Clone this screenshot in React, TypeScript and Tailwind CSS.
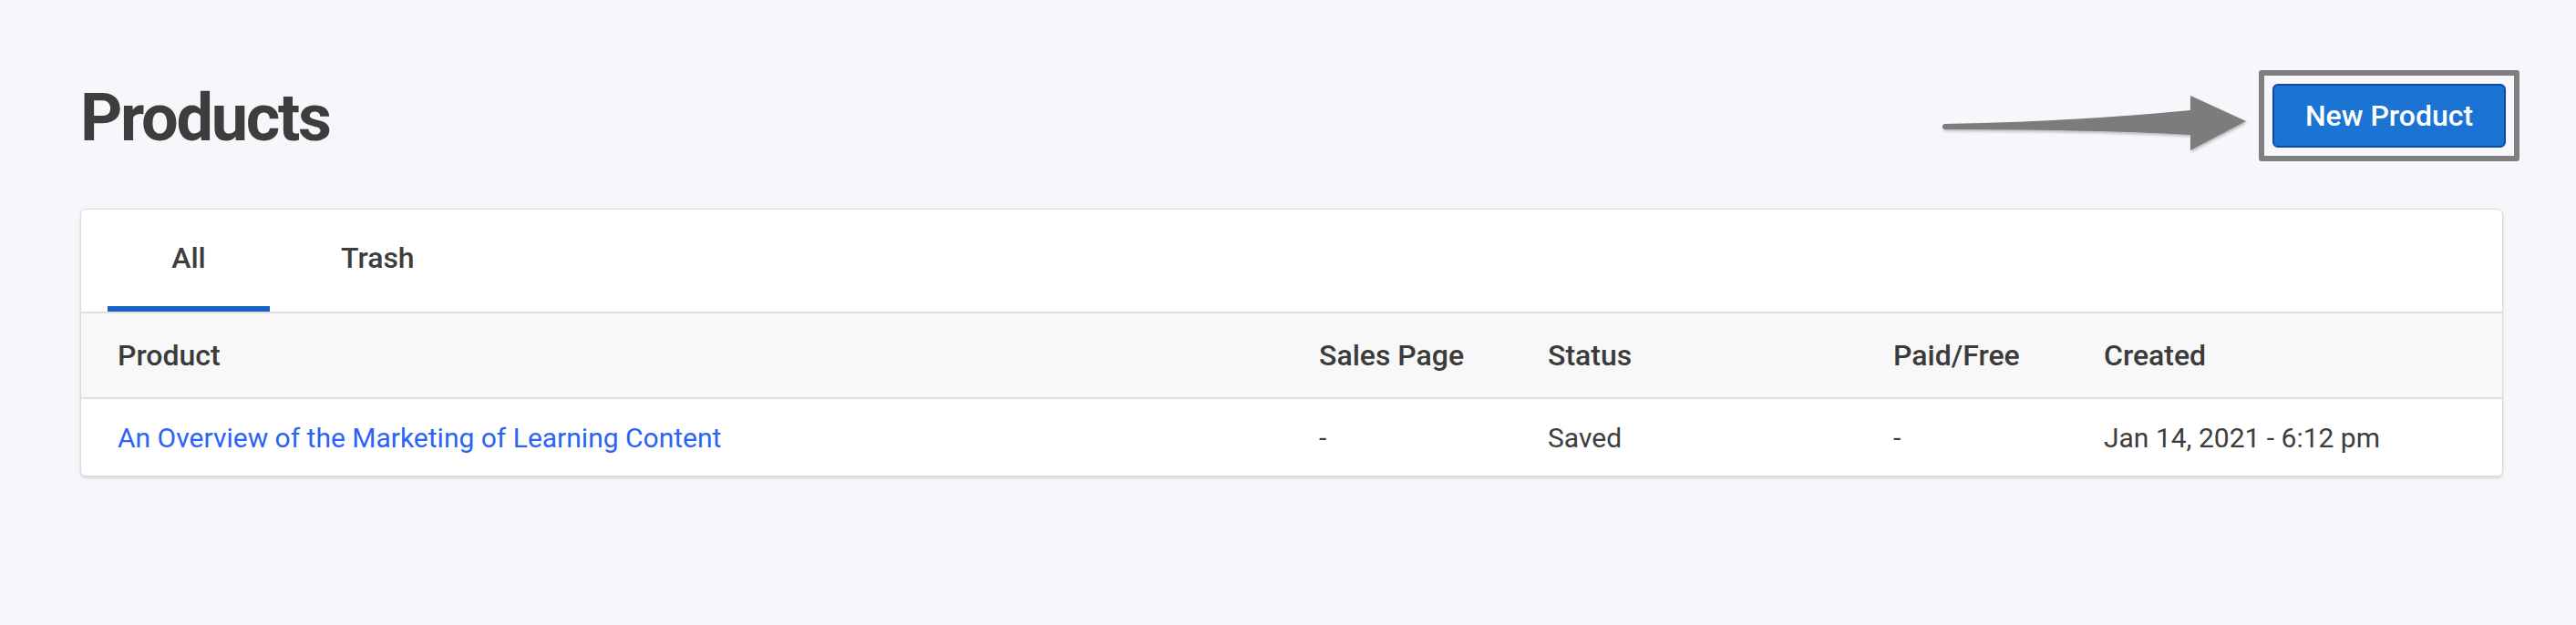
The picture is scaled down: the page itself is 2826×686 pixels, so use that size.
import React from "react";

const columns = ["Product", "Sales Page", "Status", "Paid/Free", "Created"];

const rows = [
  {
    product: "An Overview of the Marketing of Learning Content",
    salesPage: "-",
    status: "Saved",
    paid: "-",
    created: "Jan 14, 2021 - 6:12 pm",
  },
];

function Arrow() {
  return (
    <svg width="336" height="80" viewBox="0 0 336 80" className="overflow-visible mr-[11px]">
      <defs>
        <filter id="arrowShadow" x="-5%" y="-30%" width="110%" height="160%">
          <feDropShadow dx="1" dy="2" stdDeviation="1.5" floodColor="#000" floodOpacity="0.25" />
        </filter>
      </defs>
      <path
        d="M3,49 Q150,46 272,34 L272,18 L333,46 L272,78 L272,61 Q150,55 3,55 A3,3 0 0 1 3,49 Z"
        fill="#7b7b7b"
        filter="url(#arrowShadow)"
      />
    </svg>
  );
}

export default function App() {
  return (
    <div className="min-h-screen bg-[#f7f7fb] pl-[88px] pr-[80px] font-['Roboto',_'Liberation_Sans',_sans-serif] text-[#3d3d3d]">
      {/* Header */}
      <div className="flex items-center justify-between pt-[77px] mb-[52px]">
        <h1 className="text-[72px] leading-[72px] font-bold tracking-[-2.3px] mt-[5px]">Products</h1>
        <div className="flex items-center mr-[-18px]">
          <Arrow />
          <div className="border-[6px] border-[#7f7f7f] rounded-[3px] p-[9px]">
            <button className="w-[256px] h-[70px] bg-[#1b74d4] border-2 border-[#0f4aa6] rounded-[6px] text-white text-[32px] font-medium">
              New Product
            </button>
          </div>
        </div>
      </div>

      {/* Card */}
      <div className="bg-white border border-[#dadada] rounded-[6px] shadow-[0_2px_3px_rgba(0,0,0,0.12)] overflow-hidden">
        <div className="flex border-b-2 border-[#e0e0de] pl-[29px]">
          <button className="w-[178px] h-[112px] border-b-[6px] border-[#1a62c4] text-[32px] font-medium flex items-center justify-center">
            All
          </button>
          <button className="h-[112px] pl-[78px] pr-[71px] border-b-[6px] border-transparent text-[32px] font-medium flex items-center">
            Trash
          </button>
        </div>

        <div className="grid grid-cols-[1318px_251px_379px_231px_1fr] pl-[40px] h-[94px] items-center bg-[#f8f8f8] border-b-2 border-[#e0e0de] text-[32px] font-medium text-[#3b3b3b]">
          {columns.map((c) => (
            <div key={c}>{c}</div>
          ))}
        </div>

        {rows.map((r, i) => (
          <div
            key={i}
            className="grid grid-cols-[1318px_251px_379px_231px_1fr] pl-[40px] h-[84px] items-center text-[30px]"
          >
            <a href="#" className="text-[#2a63f6]">{r.product}</a>
            <div>{r.salesPage}</div>
            <div>{r.status}</div>
            <div>{r.paid}</div>
            <div>{r.created}</div>
          </div>
        ))}
      </div>
    </div>
  );
}
